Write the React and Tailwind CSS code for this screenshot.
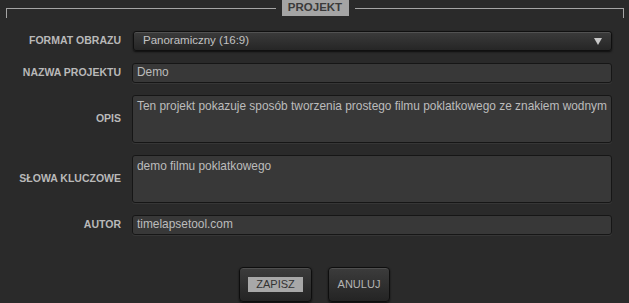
import React from "react";

const rows = [
  { label: "NAZWA PROJEKTU", value: "Demo", h: "h-[20px]" },
  {
    label: "OPIS",
    value: "Ten projekt pokazuje sposób tworzenia prostego filmu poklatkowego ze znakiem wodnym",
    h: "h-[48px]",
    multi: true,
  },
  { label: "SŁOWA KLUCZOWE", value: "demo filmu poklatkowego", h: "h-[48px]", multi: true },
  { label: "AUTOR", value: "timelapsetool.com", h: "h-[20px]" },
];

function Label({ children }) {
  return (
    <div className="flex items-center justify-end text-[10.5px] font-bold text-[#b9b9b9] whitespace-nowrap">
      {children}
    </div>
  );
}

export default function App() {
  return (
    <div
      className="w-[629px] h-[303px] overflow-hidden bg-[#2a2a2a]"
      style={{ fontFamily: '"Liberation Sans", Arial, sans-serif' }}
    >
      {/* naglowek ramki */}
      <div className="ml-[6px] w-[618px] flex items-start gap-[6px] h-[18px]">
        <div className="flex-1 mt-[8px] h-[10px] border-l border-t border-[#a5a5a5]" />
        <div className="w-[67px] h-[16px] bg-[#a4a4a4] text-[#3a3a3a] text-[11.5px] font-bold flex items-center justify-center">
          PROJEKT
        </div>
        <div className="flex-1 mt-[8px] h-[10px] border-r border-t border-[#a5a5a5]" />
      </div>

      <div className="mt-[13px] grid grid-cols-[121px_480px] gap-x-[11px] gap-y-[12px]">
        <Label>FORMAT OBRAZU</Label>
        <div className="h-[20px] ml-[1px] rounded-[3px] border border-[#101010] bg-gradient-to-b from-[#3b3b3b] to-[#262626] shadow-[0_1px_2px_rgba(0,0,0,0.7),inset_0_1px_0_rgba(255,255,255,0.12)] flex items-center justify-between pl-[9px] pr-[9px] text-[11.5px] text-[#c2c2c2]">
          <span>Panoramiczny (16:9)</span>
          <svg width="8" height="7" viewBox="0 0 8 7">
            <polygon points="0,0 8,0 4,7" fill="#c8c8c8" />
          </svg>
        </div>

        {rows.map((r) => (
          <React.Fragment key={r.label}>
            <Label>{r.label}</Label>
            <div
              className={`${r.h} rounded-[3px] border border-[#161616] bg-[#383838] shadow-[0_1px_0_rgba(255,255,255,0.06)] pl-[4px] text-[11.9px] text-[#bcbcbc] whitespace-nowrap flex ${
                r.multi ? "items-start pt-[2px]" : "items-center"
              }`}
            >
              {r.value}
            </div>
          </React.Fragment>
        ))}
      </div>

      <div className="mt-[32px] flex justify-center gap-[16px]">
        <button className="w-[73px] h-[35px] rounded-[4px] border border-[#0e0e0e] bg-gradient-to-b from-[#3c3c3c] to-[#242424] shadow-[0_1px_2px_rgba(0,0,0,0.7),inset_0_1px_0_rgba(255,255,255,0.1)] flex items-center justify-center">
          <span className="bg-[#a8a8a8] text-[#333] text-[11px] px-[8px] h-[15px] flex items-center">ZAPISZ</span>
        </button>
        <button className="w-[62px] h-[35px] rounded-[4px] border border-[#0e0e0e] bg-gradient-to-b from-[#3c3c3c] to-[#242424] shadow-[0_1px_2px_rgba(0,0,0,0.7),inset_0_1px_0_rgba(255,255,255,0.1)] flex items-center justify-center text-[11px] text-[#b4b4b4]">
          ANULUJ
        </button>
      </div>
    </div>
  );
}
